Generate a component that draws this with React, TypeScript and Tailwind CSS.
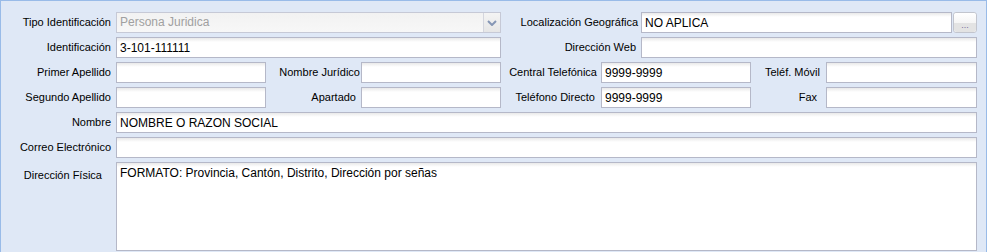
import React from "react";

const inputCls =
  "h-[21px] border border-[#b5b8c8] bg-[linear-gradient(#e9e9e9,#ffffff_4px)] px-[3px] text-[12px] leading-[19px] text-black outline-none";

function Label({ text, width, pr = 5 }: { text: string; width: number; pr?: number }) {
  return (
    <div
      className="flex h-[21px] shrink-0 items-center justify-end whitespace-nowrap text-[11px] text-black"
      style={{ width, paddingRight: pr }}
    >
      {text}
    </div>
  );
}

function Field({ width, value = "" }: { width: number; value?: string }) {
  return (
    <input
      readOnly
      value={value}
      className={inputCls + " shrink-0"}
      style={{ width }}
    />
  );
}

function ComboBox() {
  return (
    <div className="flex h-[21px] w-[385px] shrink-0 border border-[#c6c9d6] bg-[linear-gradient(#f2f2f2,#f7f7f7)]">
      <div className="flex-1 px-[3px] text-[12px] leading-[19px] text-[#a0a0a0]">Persona Juridica</div>
      <div className="flex w-[17px] items-center justify-center border-l border-[#d4d6de] bg-[linear-gradient(#f4f4f4,#e6e6e6)]">
        <svg viewBox="0 0 10 6" className="h-[6px] w-[10px]">
          <path d="M1 1L5 5L9 1" fill="none" stroke="#8596b5" strokeWidth={2} />
        </svg>
      </div>
    </div>
  );
}

function DotsButton() {
  return (
    <div className="ml-[1px] flex h-[21px] w-[24px] shrink-0 flex-col rounded-[3px] border border-[#c2c5ce] bg-white">
      <div className="h-[10px] rounded-t-[3px] bg-[linear-gradient(#ffffff,#f5f5f5)]" />
      <div className="flex flex-1 items-start justify-center rounded-b-[3px] bg-[#e3e3e3] text-[9px] leading-[5px] text-[#7a6e9e]">
        ...
      </div>
    </div>
  );
}

export default function App() {
  return (
    <div
      className="h-[252px] w-[988px] overflow-hidden bg-white"
      style={{ fontFamily: '"Liberation Sans", Arial, sans-serif' }}
    >
      <div className="h-[252px] w-[987px] border-l border-r border-t border-[#99bbe8] bg-[#dfe8f6]">
        <div className="flex flex-col gap-[4px] pt-[11px]">
          <div className="flex">
            <Label text="Tipo Identificación" width={115} />
            <ComboBox />
            <Label text="Localización Geográfica" width={140} pr={3} />
            <Field width={311} value="NO APLICA" />
            <DotsButton />
          </div>
          <div className="flex">
            <Label text="Identificación" width={115} />
            <Field width={385} value="3-101-111111" />
            <Label text="Dirección Web" width={140} pr={5} />
            <Field width={336} />
          </div>
          <div className="flex">
            <Label text="Primer Apellido" width={115} />
            <Field width={150} />
            <Label text="Nombre Jurídico" width={95} pr={1} />
            <Field width={140} />
            <Label text="Central Telefónica" width={100} pr={4} />
            <Field width={150} value="9999-9999" />
            <Label text="Teléf. Móvil" width={75} pr={6} />
            <Field width={151} />
          </div>
          <div className="flex">
            <Label text="Segundo Apellido" width={115} />
            <Field width={150} />
            <Label text="Apartado" width={95} pr={5} />
            <Field width={140} />
            <Label text="Teléfono Directo" width={100} pr={6} />
            <Field width={150} value="9999-9999" />
            <Label text="Fax" width={75} pr={9} />
            <Field width={151} />
          </div>
          <div className="flex">
            <Label text="Nombre" width={115} />
            <Field width={861} value="NOMBRE O RAZON SOCIAL" />
          </div>
          <div className="flex">
            <Label text="Correo Electrónico" width={115} />
            <Field width={861} />
          </div>
          <div className="flex">
            <div className="w-[115px] shrink-0 whitespace-nowrap pr-[14px] pt-[5px] text-right text-[11px] text-black">
              Dirección Física
            </div>
            <textarea
              readOnly
              value="FORMATO: Provincia, Cantón, Distrito, Dirección por señas"
              className="h-[89px] w-[861px] shrink-0 resize-none border border-[#b5b8c8] bg-[linear-gradient(#e9e9e9,#ffffff_4px)] px-[3px] pt-[2px] text-[12px] leading-[16px] text-black outline-none"
            />
          </div>
        </div>
      </div>
    </div>
  );
}
